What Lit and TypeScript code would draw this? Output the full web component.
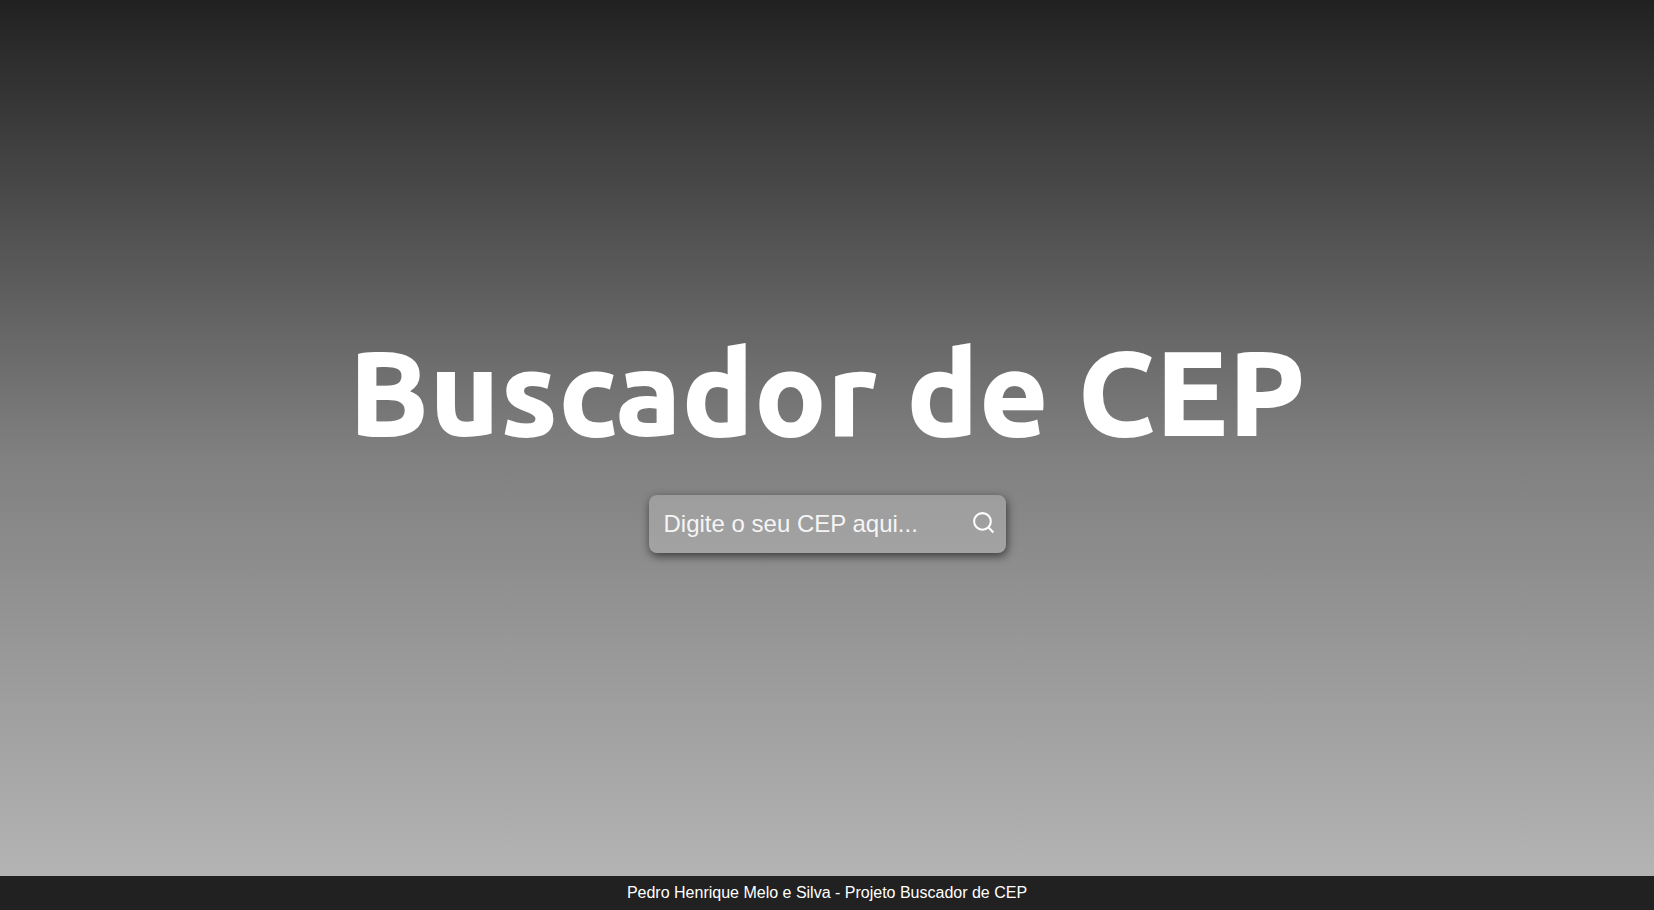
import { LitElement, html, css } from "lit";
import { customElement, state } from "lit/decorators.js";

@customElement("app-root")
export class AppRoot extends LitElement {
  static styles = css`
    :host {
      display: flex;
      flex-direction: column;
      min-height: 100vh;
      font-family: "Liberation Sans", Arial, sans-serif;
      color: #fff;
      background: linear-gradient(180deg, #212121, #808080, #b8b8b8);
    }
    .main {
      flex: 1;
      display: flex;
      flex-direction: column;
      align-items: center;
      justify-content: center;
      gap: 34px;
    }
    .title {
      margin: 0;
      font-family: Ubuntu, "Noto Sans", sans-serif;
      font-size: 120px;
      font-weight: 800;
      line-height: 138px;
      text-align: center;
    }
    .search {
      display: flex;
      align-items: center;
      box-sizing: border-box;
      height: 58px;
      padding: 0 10px 0 15px;
      border-radius: 8px;
      background: rgba(255, 255, 255, 0.2);
      box-shadow: 1px 3px 10px rgba(0, 0, 0, 0.6);
    }
    .field {
      width: 307px;
      height: 40px;
      padding: 0;
      border: 0;
      outline: 0;
      background: transparent;
      color: #f5f5f5;
      font: 24px "Liberation Sans", Arial, sans-serif;
    }
    .field::placeholder {
      color: #f5f5f5;
      opacity: 1;
    }
    .submit {
      display: flex;
      padding: 0 0 4px;
      border: 0;
      background: transparent;
      color: #fff;
      cursor: pointer;
    }
    .footer {
      background: #212121;
      padding: 8px;
      font-size: 16px;
      line-height: 18px;
      text-align: center;
    }
  `;

  @state() private cep = "";

  private onInput(e: Event) {
    this.cep = (e.target as HTMLInputElement).value;
  }

  private onSubmit(e: Event) {
    e.preventDefault();
  }

  render() {
    return html`
      <main class="main">
        <h1 class="title">Buscador de CEP</h1>
        <form class="search" @submit=${this.onSubmit}>
          <input
            class="field"
            type="text"
            aria-label="CEP"
            placeholder="Digite o seu CEP aqui..."
            .value=${this.cep}
            @input=${this.onInput}
          />
          <button class="submit" type="submit" aria-label="Buscar">
            <svg width="25" height="25" viewBox="0 0 24 24" fill="none" stroke="currentColor"
              stroke-width="2" stroke-linecap="butt" stroke-linejoin="round" aria-hidden="true">
              <circle cx="11" cy="11" r="8"></circle>
              <line x1="21.5" y1="21.5" x2="16.65" y2="16.65"></line>
            </svg>
          </button>
        </form>
      </main>
      <footer class="footer">Pedro Henrique Melo e Silva - Projeto Buscador de CEP</footer>
    `;
  }
}
